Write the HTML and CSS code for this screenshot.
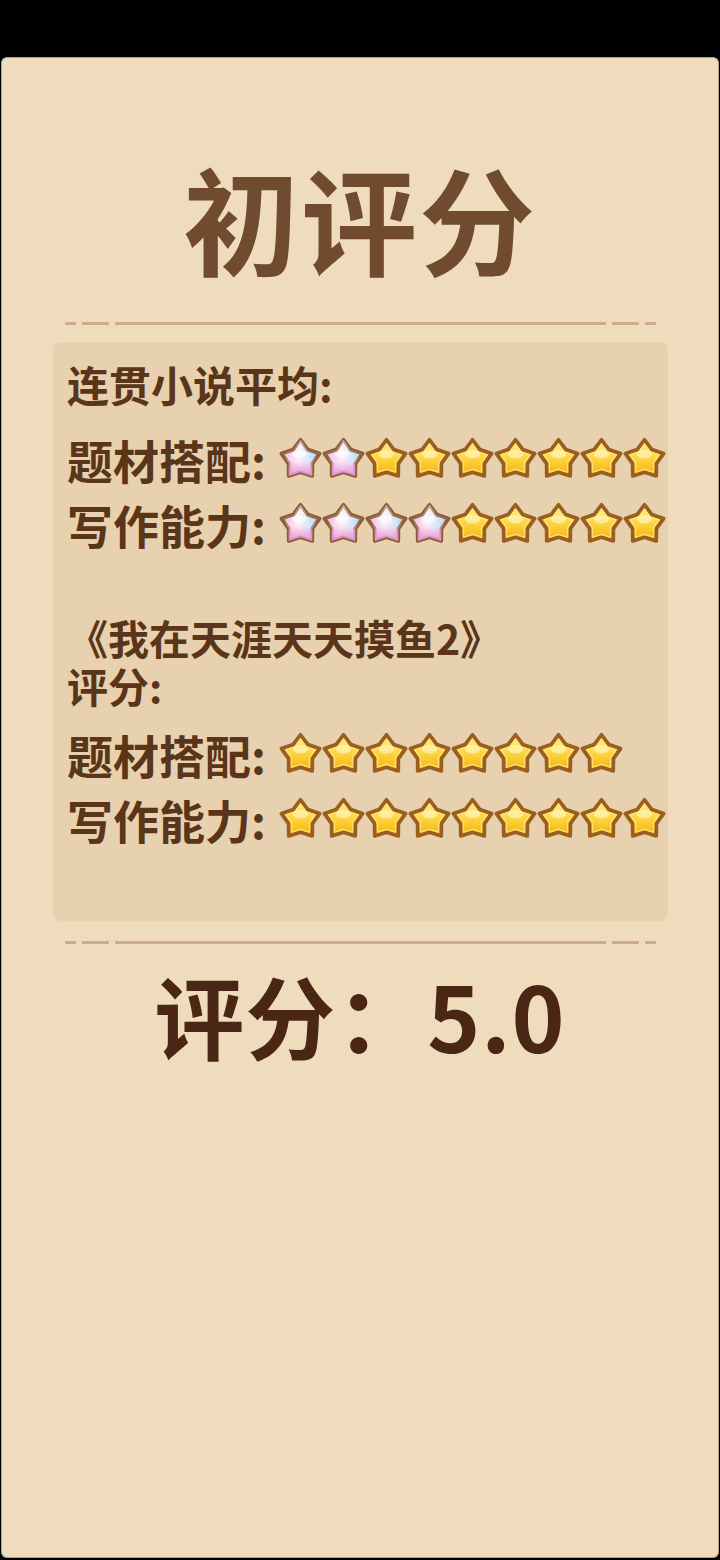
FILE: index.html
```html
<!DOCTYPE html>
<html lang="zh-CN">
<head>
<meta charset="utf-8">
<title>初评分</title>
<link rel="stylesheet" href="styles.css">
</head>
<body>
<svg class="defs" width="0" height="0" aria-hidden="true">
  <defs>
    <linearGradient id="g-gold" x1="0" y1="0" x2="0" y2="1">
      <stop offset="0" stop-color="#fff5a8"/>
      <stop offset="0.35" stop-color="#ffe052"/>
      <stop offset="0.75" stop-color="#f8c425"/>
      <stop offset="1" stop-color="#eea70f"/>
    </linearGradient>
    <linearGradient id="g-rb-h" x1="0" y1="0" x2="1" y2="0">
      <stop offset="0" stop-color="#f3b1e2"/>
      <stop offset="0.45" stop-color="#fbeff7"/>
      <stop offset="0.7" stop-color="#d4eafa"/>
      <stop offset="1" stop-color="#9fcff1"/>
    </linearGradient>
    <linearGradient id="g-rb-v" x1="0" y1="0" x2="0" y2="1">
      <stop offset="0" stop-color="#ffffff" stop-opacity="0.55"/>
      <stop offset="0.45" stop-color="#ffffff" stop-opacity="0"/>
      <stop offset="0.75" stop-color="#f1aee0" stop-opacity="0.7"/>
      <stop offset="1" stop-color="#e596d6" stop-opacity="0.95"/>
    </linearGradient>
    <symbol id="star-gold" viewBox="2.8 2.8 34.4 34.4">
      <path d="M20 5 L25.88 12.91 L35.22 16.06 L29.51 24.09 L29.4 33.94 L20 31 L10.6 33.94 L10.49 24.09 L4.78 16.06 L14.12 12.91 Z" fill="url(#g-gold)" stroke="#9a5f20" stroke-width="3" stroke-linejoin="round"/>
      <path d="M20 8.6 L24.3 14.6 L31.6 17.1 L27.2 23.3 L27.2 30.9 L20 28.6 L12.8 30.9 L12.8 23.3 L8.4 17.1 L15.7 14.6 Z" fill="none" stroke="#ffe27a" stroke-width="1.1" stroke-linejoin="round" opacity="0.9"/>
      <ellipse cx="20" cy="16.5" rx="6" ry="3.4" fill="#fffbe0" opacity="0.55"/>
    </symbol>
    <symbol id="star-rainbow" viewBox="2.8 2.8 34.4 34.4">
      <path d="M20 5 L25.88 12.91 L35.22 16.06 L29.51 24.09 L29.4 33.94 L20 31 L10.6 33.94 L10.49 24.09 L4.78 16.06 L14.12 12.91 Z" fill="url(#g-rb-h)" stroke="#8c5c3a" stroke-width="3" stroke-linejoin="round"/>
      <path d="M20 5 L25.88 12.91 L35.22 16.06 L29.51 24.09 L29.4 33.94 L20 31 L10.6 33.94 L10.49 24.09 L4.78 16.06 L14.12 12.91 Z" fill="url(#g-rb-v)"/>
      <ellipse cx="19" cy="16.5" rx="5.5" ry="3.2" fill="#ffffff" opacity="0.6"/>
    </symbol>
  </defs>
</svg>

<main class="panel">
  <h1 class="title">初评分</h1>

  <div class="divider top">
    <span class="dash d1"></span><span class="dash d2"></span><span class="line"></span><span class="dash d2"></span><span class="dash d1"></span>
  </div>

  <section class="box">
    <div class="head">连贯小说平均:</div>
    <div class="row">
      <span class="label">题材搭配:</span>
      <span class="stars">
        <svg class="star"><use href="#star-rainbow"/></svg><svg class="star"><use href="#star-rainbow"/></svg><svg class="star"><use href="#star-gold"/></svg><svg class="star"><use href="#star-gold"/></svg><svg class="star"><use href="#star-gold"/></svg><svg class="star"><use href="#star-gold"/></svg><svg class="star"><use href="#star-gold"/></svg><svg class="star"><use href="#star-gold"/></svg><svg class="star"><use href="#star-gold"/></svg>
      </span>
    </div>
    <div class="row">
      <span class="label">写作能力:</span>
      <span class="stars">
        <svg class="star"><use href="#star-rainbow"/></svg><svg class="star"><use href="#star-rainbow"/></svg><svg class="star"><use href="#star-rainbow"/></svg><svg class="star"><use href="#star-rainbow"/></svg><svg class="star"><use href="#star-gold"/></svg><svg class="star"><use href="#star-gold"/></svg><svg class="star"><use href="#star-gold"/></svg><svg class="star"><use href="#star-gold"/></svg><svg class="star"><use href="#star-gold"/></svg>
      </span>
    </div>

    <div class="book">《我在天涯天天摸鱼2》<br>评分:</div>
    <div class="row">
      <span class="label">题材搭配:</span>
      <span class="stars">
        <svg class="star"><use href="#star-gold"/></svg><svg class="star"><use href="#star-gold"/></svg><svg class="star"><use href="#star-gold"/></svg><svg class="star"><use href="#star-gold"/></svg><svg class="star"><use href="#star-gold"/></svg><svg class="star"><use href="#star-gold"/></svg><svg class="star"><use href="#star-gold"/></svg><svg class="star"><use href="#star-gold"/></svg>
      </span>
    </div>
    <div class="row">
      <span class="label">写作能力:</span>
      <span class="stars">
        <svg class="star"><use href="#star-gold"/></svg><svg class="star"><use href="#star-gold"/></svg><svg class="star"><use href="#star-gold"/></svg><svg class="star"><use href="#star-gold"/></svg><svg class="star"><use href="#star-gold"/></svg><svg class="star"><use href="#star-gold"/></svg><svg class="star"><use href="#star-gold"/></svg><svg class="star"><use href="#star-gold"/></svg><svg class="star"><use href="#star-gold"/></svg>
      </span>
    </div>
  </section>

  <div class="divider bottom">
    <span class="dash d1"></span><span class="dash d2"></span><span class="line"></span><span class="dash d2"></span><span class="dash d1"></span>
  </div>

  <div class="score">评分：5.0</div>
</main>
</body>
</html>
```

FILE: styles.css
```css
html {
  background: #000;
}

body {
  margin: 0;
  padding-top: 57px;
  width: 720px;
  height: 1503px;
  background: #000;
  font-family: "Noto Sans CJK SC", "Noto Sans", sans-serif;
}

.defs {
  display: block;
  width: 0;
  height: 0;
  overflow: hidden;
}

.panel {
  box-sizing: border-box;
  margin: 0 1px;
  height: 1501px;
  background: #eedcbd;
  border: 1px solid #b99e7e;
  border-top-color: #7fa7cc;
  border-left-color: #86aacb;
  border-radius: 6px;
  display: flex;
  flex-direction: column;
  align-items: stretch;
  padding: 88px 0 0;
}

.title {
  margin: 0;
  text-align: center;
  font-size: 116px;
  line-height: 140px;
  font-weight: 700;
  color: #704b2f;
  letter-spacing: 2px;
}

.divider {
  display: flex;
  align-items: center;
  height: 3px;
  margin: 0 62px 0 63px;
}

.divider.top {
  margin-top: 36px;
}

.divider.bottom {
  margin-top: 20px;
}

.dash,
.line {
  height: 3px;
  background: #cfaa88;
  border-radius: 1px;
}

.d1 {
  width: 11px;
}

.d2 {
  width: 27px;
  margin: 0 6px;
}

.line {
  flex: 1;
}

.box {
  margin: 17px 50px 0 51px;
  background: #e8d1af;
  border-radius: 8px;
  padding: 9px 0 70px 14px;
  color: #5a3519;
  font-weight: 700;
}

.head {
  font-size: 42px;
  line-height: 65px;
  margin-bottom: 10px;
  white-space: nowrap;
}

.row {
  display: flex;
  align-items: center;
  height: 65px;
  white-space: nowrap;
}

.label {
  font-size: 46px;
  width: 212px;
  flex: none;
}

.stars {
  display: flex;
  align-items: center;
}

.star {
  width: 43px;
  height: 43px;
  flex: none;
}

.book {
  margin-top: 57px;
  margin-bottom: 12px;
  font-size: 41px;
  line-height: 48px;
  white-space: nowrap;
}

.score {
  margin-top: 16px;
  text-align: center;
  font-size: 90px;
  line-height: 108px;
  font-weight: 700;
  color: #4a2715;
  letter-spacing: 1px;
}
```
